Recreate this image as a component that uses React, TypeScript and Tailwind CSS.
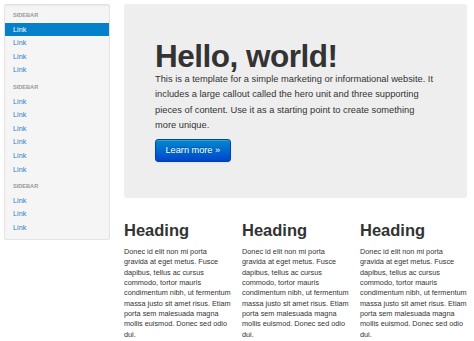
import React from "react";

const sections = [
  { title: "Sidebar", links: 4, active: 0 },
  { title: "Sidebar", links: 6, active: -1 },
  { title: "Sidebar", links: 3, active: -1 },
];

const body =
  "Donec id elit non mi porta gravida at eget metus. Fusce dapibus, tellus ac cursus commodo, tortor mauris condimentum nibh, ut fermentum massa justo sit amet risus. Etiam porta sem malesuada magna mollis euismod. Donec sed odio dui.";

function Sidebar() {
  return (
    <div className="w-[106px] shrink-0 self-start rounded-[2px] border border-[#e3e3e3] bg-[#f5f5f5] pt-[4px] pb-[4px] shadow-[inset_0_1px_1px_rgba(0,0,0,0.05)]">
      {sections.map((s, i) => (
        <ul key={i} className={i > 0 ? "mt-[4px]" : ""}>
          <li className="px-[8px] text-[5.6px] font-bold uppercase leading-[13.6px] text-[#999999]">
            {s.title}
          </li>
          {Array.from({ length: s.links }).map((_, j) => (
            <li key={j}>
              <a
                href="#"
                className={`block px-[8px] text-[7.3px] leading-[13.6px] ${
                  j === s.active ? "bg-[#0581cc] text-white" : "text-[#2f80c6]"
                }`}
              >
                Link
              </a>
            </li>
          ))}
        </ul>
      ))}
    </div>
  );
}

function Hero() {
  return (
    <div className="rounded-[3px] bg-[#eeeeee] px-[31px] pt-[37px] pb-[36px]">
      <h1 className="text-[31.5px] font-bold leading-[31px] tracking-[-0.5px] text-[#333333]">
        Hello, world!
      </h1>
      <p className="whitespace-nowrap text-[9.3px] leading-[15.3px] text-[#333333]">
        This is a template for a simple marketing or informational website. It
        <br />
        includes a large callout called the hero unit and three supporting
        <br />
        pieces of content. Use it as a starting point to create something
        <br />
        more unique.
      </p>
      <a
        href="#"
        className="mt-[6px] flex h-[23px] w-fit items-center rounded-[3px] border border-[#0044aa] bg-gradient-to-b from-[#0088cc] to-[#0044cc] px-[9.5px] text-[9.2px] text-white shadow-[inset_0_1px_0_rgba(255,255,255,0.2),0_1px_2px_rgba(0,0,0,0.05)] [text-shadow:0_-1px_0_rgba(0,0,0,0.25)]"
      >
        Learn more »
      </a>
    </div>
  );
}

export default function App() {
  return (
    <div className="flex min-h-[341px] gap-[14px] bg-white pt-[4px] pl-[4px] font-['Liberation_Sans',Arial,sans-serif] text-[#333333]">
      <Sidebar />
      <div className="w-[343px] shrink-0">
        <Hero />
        <div className="mt-[22px] flex gap-[10px]">
          {[0, 1, 2].map((i) => (
            <div key={i} className="w-[108px] shrink-0">
              <h2 className="text-[16.5px] font-bold leading-[20px] text-[#333333]">Heading</h2>
              <p className="mt-[6.8px] text-[7.3px] leading-[10.34px] text-[#333333]">{body}</p>
            </div>
          ))}
        </div>
      </div>
    </div>
  );
}
